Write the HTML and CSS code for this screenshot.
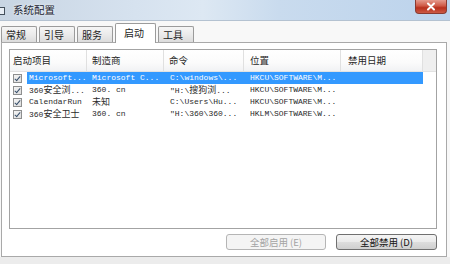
FILE: index.html
```html
<!DOCTYPE html>
<html lang="zh-CN">
<head>
<meta charset="utf-8">
<title>系统配置</title>
<link rel="stylesheet" href="styles.css">
</head>
<body>
<div class="window">
  <div class="titlebar">
    <span class="app-icon"></span>
    <span class="title">系统配置</span>
    <span class="close">
      <svg width="12" height="9" viewBox="0 0 12 9"><path d="M3 1.5 L9 7.5 M9 1.5 L3 7.5" stroke="#fff" stroke-width="2" stroke-linecap="round"/></svg>
    </span>
  </div>
  <div class="client">
    <div class="tabs">
      <div class="tab">常规</div>
      <div class="tab">引导</div>
      <div class="tab">服务</div>
      <div class="tab active">启动</div>
      <div class="tab">工具</div>
    </div>
    <div class="panel">
      <div class="list">
        <div class="header">
          <div class="hcell w1">启动项目</div>
          <div class="hcell w2">制造商</div>
          <div class="hcell w3">命令</div>
          <div class="hcell w4">位置</div>
          <div class="hcell w5">禁用日期</div>
          <div class="hfill"></div>
        </div>
        <div class="row selected">
          <div class="checkcell"><span class="check"></span></div>
          <div class="cell t1">Microsoft...</div>
          <div class="cell w2">Microsoft C...</div>
          <div class="cell w3">C:\windows\...</div>
          <div class="cell w4">HKCU\SOFTWARE\M...</div>
          <div class="cell w5"></div>
        </div>
        <div class="row">
          <div class="checkcell"><span class="check"></span></div>
          <div class="cell t1">360<span class="cjk">安全浏</span>...</div>
          <div class="cell w2">360. cn</div>
          <div class="cell w3">"H:\<span class="cjk">搜狗浏</span>...</div>
          <div class="cell w4">HKCU\SOFTWARE\M...</div>
          <div class="cell w5"></div>
        </div>
        <div class="row">
          <div class="checkcell"><span class="check"></span></div>
          <div class="cell t1">CalendarRun</div>
          <div class="cell w2"><span class="cjk">未知</span></div>
          <div class="cell w3">C:\Users\Hu...</div>
          <div class="cell w4">HKCU\SOFTWARE\M...</div>
          <div class="cell w5"></div>
        </div>
        <div class="row">
          <div class="checkcell"><span class="check"></span></div>
          <div class="cell t1">360<span class="cjk">安全卫士</span></div>
          <div class="cell w2">360. cn</div>
          <div class="cell w3">"H:\360\360...</div>
          <div class="cell w4">HKLM\SOFTWARE\W...</div>
          <div class="cell w5"></div>
        </div>
      </div>
      <div class="buttons">
        <button class="btn disabled">全部启用 (E)</button>
        <button class="btn">全部禁用 (D)</button>
      </div>
    </div>
  </div>
  <div class="strip"></div>
</div>
</body>
</html>
```

FILE: styles.css
```css
* { box-sizing: border-box; }
html, body { margin: 0; padding: 0; }
body {
  width: 450px;
  height: 264px;
  overflow: hidden;
  background: #f0f0f0;
  font-family: "Noto Sans CJK SC", "Noto Sans", sans-serif;
}
.window {
  width: 450px;
  height: 264px;
  display: flex;
  flex-direction: column;
  background: #f8f8f8;
}
.titlebar {
  height: 21px;
  flex: none;
  display: flex;
  align-items: center;
  background: linear-gradient(90deg, #c8d5e3 0%, #d6e2ef 30%, #dde8f3 45%, #c9dbee 62%, #bcd3ec 100%);
  border-bottom: 1px solid #b4c2d1;
}
.app-icon {
  width: 5px;
  height: 8px;
  border: 1px solid #44505c;
  border-left: none;
  background: #e8eef5;
  margin-top: 1px;
}
.title {
  margin-left: 8px;
  font-size: 10.5px;
  color: #1b2430;
  line-height: 1;
  text-shadow: 0 0 3px #fff;
}
.close {
  margin-left: auto;
  margin-right: 3px;
  align-self: flex-start;
  width: 32px;
  height: 14px;
  display: flex;
  align-items: center;
  justify-content: center;
  background: linear-gradient(180deg, #e59a8d 0%, #cf5a47 45%, #b8301d 60%, #cc5a44 100%);
  border: 1px solid #8a3a30;
  border-top: none;
  border-radius: 0 0 4px 4px;
}
.client {
  flex: 1;
  display: flex;
  flex-direction: column;
  padding: 2px 0 0 1px;
}
.tabs {
  height: 19px;
  display: flex;
  align-items: flex-end;
  gap: 2px;
  position: relative;
  z-index: 1;
}
.tab {
  width: 36px;
  height: 16px;
  border: 1px solid #9b9b9b;
  border-bottom: none;
  border-radius: 2px 2px 0 0;
  background: linear-gradient(180deg, #f6f6f6 0%, #ebebeb 50%, #dcdcdc 100%);
  font-size: 10px;
  line-height: 15px;
  color: #1e1e1e;
  padding-left: 4px;
}
.tab.active {
  width: 41px;
  height: 20px;
  margin-bottom: -1px;
  background: #ffffff;
  padding-left: 8px;
  line-height: 18px;
}
.panel {
  flex: 1;
  width: 446px;
  background: #ffffff;
  border: 1px solid #a9a9a9;
  padding: 6px 9px 0 7px;
  display: flex;
  flex-direction: column;
}
.list {
  height: 180px;
  border: 1px solid #a3a3a3;
  background: #fff;
}
.header {
  height: 22px;
  display: flex;
  border-bottom: 1px solid #e2e2e2;
  background: linear-gradient(180deg, #ffffff 0%, #fbfbfb 60%, #f1f2f4 100%);
}
.hcell {
  font-size: 9.5px;
  color: #1f1f1f;
  line-height: 21px;
  border-right: 1px solid #e0e0e0;
  padding-left: 5px;
  white-space: nowrap;
}
.hcell.w1 { padding-left: 3px; }
.hcell.w4 { padding-left: 6px; }
.hcell.w5 { padding-left: 7px; }
.hfill {
  flex: 1;
  background: #efefef;
}
.w1 { width: 77px; }
.w2 { width: 77px; }
.w3 { width: 80px; }
.w4 { width: 97px; }
.w5 { width: 82px; }
.row {
  height: 12px;
  display: flex;
  font-family: "Liberation Mono", "Noto Sans CJK SC", monospace;
  font-size: 8px;
  color: #2b2b2b;
}
.checkcell {
  width: 17px;
  display: flex;
  align-items: center;
  padding-left: 3px;
}
.check {
  width: 9px;
  height: 9px;
  border: 1px solid #8e8f8f;
  background: linear-gradient(135deg, #f4f4f4, #dedede);
  position: relative;
}
.check::after {
  content: "";
  position: absolute;
  left: 2px;
  top: 0px;
  width: 2px;
  height: 5px;
  border: solid #38506c;
  border-width: 0 1.5px 1.5px 0;
  transform: rotate(40deg);
}
.cell {
  line-height: 12px;
  white-space: nowrap;
  overflow: hidden;
  padding-left: 5px;
}
.cell.t1 { width: 60px; padding-left: 2px; }
.cell.w3, .cell.w4 { padding-left: 6px; }
.cjk {
  font-family: "Noto Sans CJK SC", sans-serif;
  font-size: 9px;
}
.row.selected .cell {
  background: #3399ff;
  color: #ffffff;
}
.buttons {
  margin-top: 5px;
  display: flex;
  justify-content: flex-end;
  gap: 10px;
}
.btn {
  width: 101px;
  height: 16px;
  padding: 0;
  border: 1px solid #707070;
  border-radius: 3px;
  background: linear-gradient(180deg, #f4f4f4 0%, #ebebeb 48%, #dddddd 52%, #cfcfcf 100%);
  font-family: "Noto Sans CJK SC", sans-serif;
  font-size: 9.5px;
  line-height: 14px;
  color: #111;
}
.btn.disabled {
  width: 100px;
  border-color: #b5b5b5;
  background: #f4f4f4;
  color: #a3a3a3;
}
.strip {
  height: 7px;
  flex: none;
  background: #ececec;
}
```
